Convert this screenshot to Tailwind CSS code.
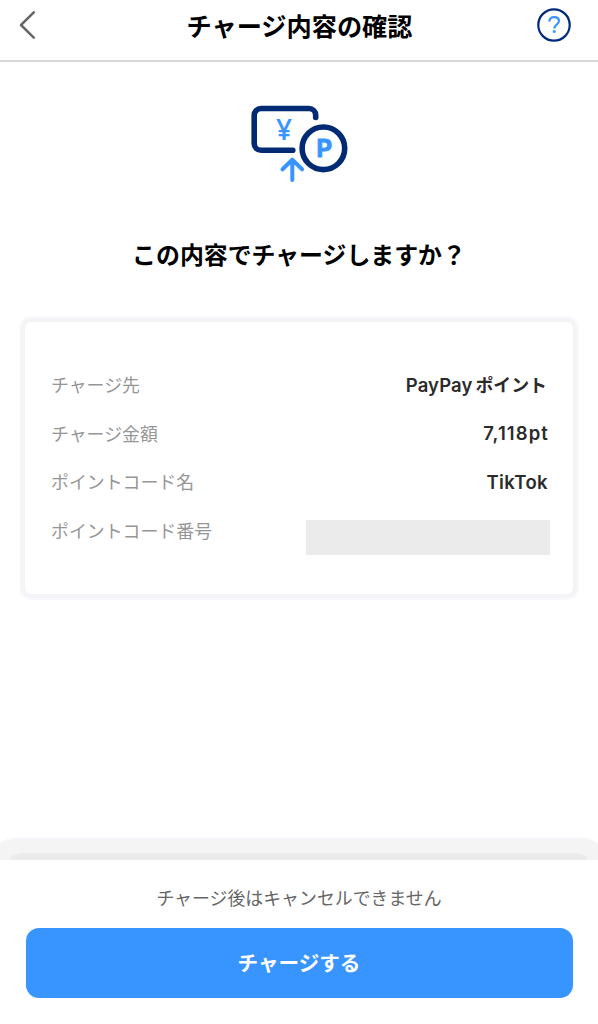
<!DOCTYPE html>
<html lang="ja">
<head>
<meta charset="utf-8"/>
<meta content="width=device-width, initial-scale=1" name="viewport"/>
<title>チャージ内容の確認</title>
<script src="https://cdn.jsdelivr.net/npm/@tailwindcss/browser@4"></script>
</head>
<body class="flex h-[1024px] flex-col overflow-hidden bg-white font-['Inter','Noto_Sans_CJK_JP',sans-serif]">
<header class="flex h-[62px] shrink-0 items-center justify-between border-b-2 border-[#d8d8d8] pb-[10px] pr-[26px] pl-[18px]">
<button class="w-[45px]" type="button">
<svg class="h-[32px] w-[20px]" fill="none" stroke="#666" stroke-linecap="round" stroke-linejoin="round" stroke-width="2.5" viewBox="0 0 20 32"><path d="M15.800 3.400 3 16l12.800 12.600"/></svg>
</button>
<h1 class="pt-[4px] text-[25.200px] leading-[36px] font-bold whitespace-nowrap text-black">チャージ内容の確認</h1>
<button type="button">
<svg class="h-[36px] w-[36px]" fill="none" viewBox="0 0 36 36"><circle cx="18" cy="18" r="15.700" stroke="#002b78" stroke-width="2.200"/><path d="M13.300 14.600c.2-2.800 2-4.500 4.900-4.500 2.900 0 4.800 1.600 4.800 4 0 3.500-4.800 3.500-4.800 7.400" stroke="#3895ff" stroke-width="2.200"/><rect fill="#3895ff" height="2.600" width="2.800" x="16.800" y="23.200"/></svg>
</button>
</header>

<main class="flex flex-1 flex-col">
<svg class="mt-[38px] ml-[245px] h-[90px] w-[110px]" fill="none" stroke-linecap="round" stroke-width="5.600" viewBox="245 100 110 90">
<path d="M315.700 117.500v-2.200a6.800 6.800 0 0 0-6.800-6.800H261a6.800 6.800 0 0 0-6.800 6.800v28.200a6.800 6.800 0 0 0 6.800 6.800h31.800" stroke="#002b74"/>
<circle cx="323.400" cy="148.300" r="21.300" stroke="#002b74"/>
<text class="font-['Inter'] font-bold" fill="#3895ff" font-size="24" stroke="#3895ff" stroke-linejoin="round" stroke-width="0.900" text-anchor="middle" x="324.200" y="157.300">P</text>
<text class="font-['Open_Sans'] font-semibold" fill="#3895ff" font-size="28" stroke="none" text-anchor="middle" x="283.900" y="140.300">¥</text>
<path d="M292.300 180v-20M282.500 169.300l9.800-9.600 9.800 9.600" stroke="#3895ff" stroke-linejoin="round" stroke-width="4"/>
</svg>
<h2 class="mt-[48px] text-center text-[23.900px] leading-[36px] font-bold whitespace-nowrap text-black">この内容でチャージしますか？</h2>

<!-- 明細カード -->
<section class="mx-[25px] mt-[47.500px] h-[272px] rounded-[6px] bg-white pt-[39px] pr-[26px] pl-[26px] shadow-[0_0_0_4px_#f4f4f5,0_0_0_6px_#f7f9fd]">
<dl class="text-[17.900px] text-[#969696]">
<div class="flex h-[48.700px] items-center justify-between">
<dt class="pt-[3px]">チャージ先</dt>
<dd class="pt-[2px] text-[18.500px] font-semibold tracking-[0.1px] text-[#2b2b2b]">PayPay<span class="ml-[3px] text-[17.900px] tracking-normal">ポイント</span></dd>
</div>
<div class="flex h-[48.700px] items-center justify-between">
<dt class="pt-[3px]">チャージ金額</dt>
<dd class="-mr-[2px] text-[18.500px] font-semibold tracking-[1.100px] text-[#2b2b2b]">7,118pt</dd>
</div>
<div class="flex h-[48.700px] items-center justify-between">
<dt class="pt-[3px]">ポイントコード名</dt>
<dd class="-mr-px pt-px text-[18.500px] font-semibold tracking-[0.4px] text-[#2b2b2b]">TikTok</dd>
</div>
<div class="flex h-[48.700px] items-center justify-between">
<dt class="pt-[3px]">ポイントコード番号</dt>
<dd class="mt-[14px] -mr-[3px] h-[35px] w-[244px] bg-[#ebebeb]"></dd>
</div>
</dl>
</section>
</main>

<footer class="shrink-0">
<!-- シートの影 -->
<div class="-mx-[8px] flex h-[23px] items-end rounded-t-[28px] border-t-2 border-[#f8fafd] bg-[#f4f4f4] px-[18px]">
<div class="h-[7px] flex-1 rounded-t-[14px_7px] bg-[#ebebeb] [border-radius:14px_14px_0_0/7px_7px_0_0]"></div>
</div>
<div class="h-[164px] bg-white px-[25.500px] pt-[24px]">
<p class="text-center text-[17.900px] leading-[30px] text-[#666]">チャージ後はキャンセルできません</p>
<button class="mt-[14px] h-[70px] w-full rounded-[13px] bg-[#3895ff] pt-[3px] text-[20.600px] font-bold text-white" type="button">チャージする</button>
</div>
</footer>
</body>
</html>
